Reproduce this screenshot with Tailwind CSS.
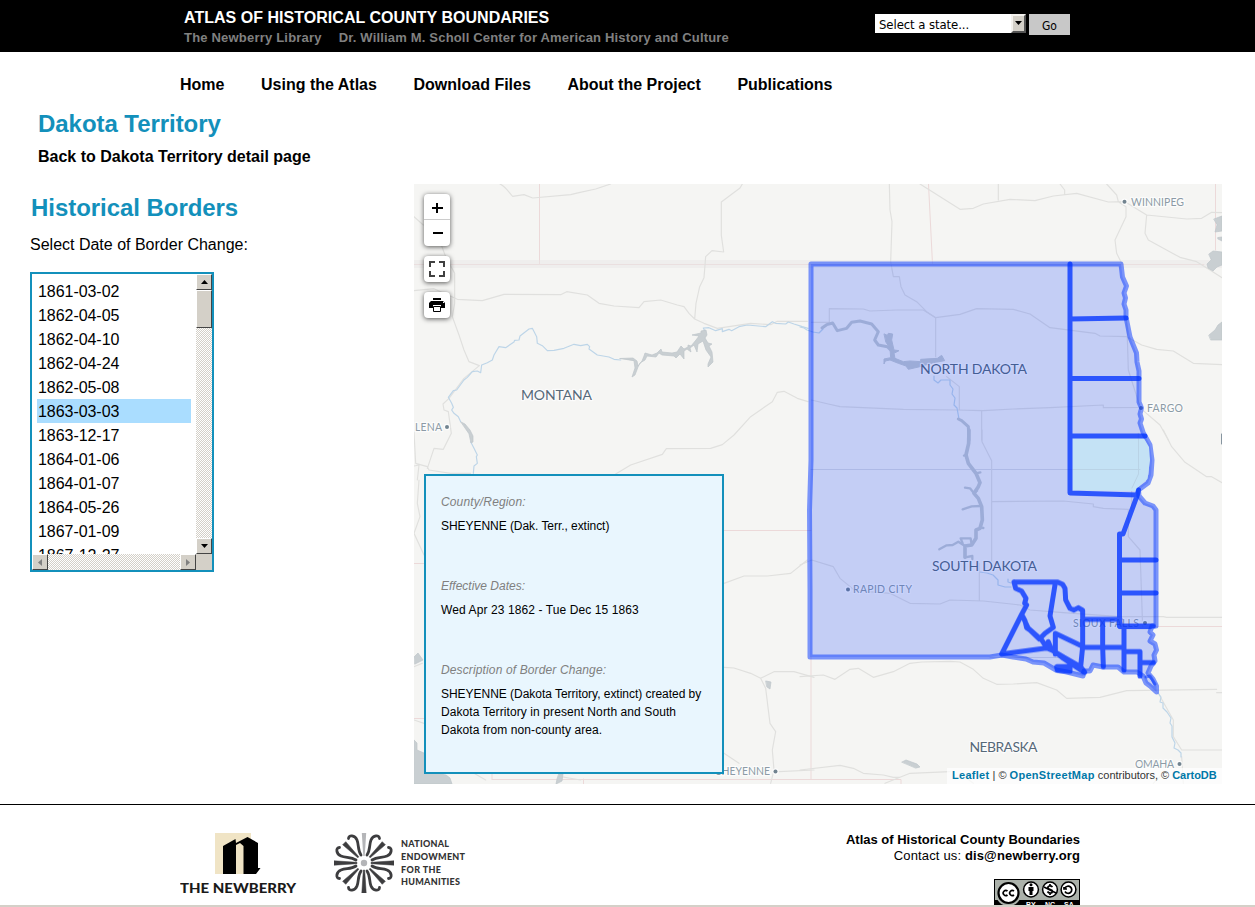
<!DOCTYPE html>
<html lang="en">
<head>
<meta charset="utf-8">
<title>Dakota Territory - Atlas of Historical County Boundaries</title>
<script src="https://cdn.jsdelivr.net/npm/@tailwindcss/browser@4"></script>
</head>
<body class="flex h-[907px] flex-col overflow-hidden bg-white font-['Liberation_Sans',Arial,sans-serif] text-black">
<header class="flex h-[52px] shrink-0 bg-black pl-[184px]">
  <div class="w-[691px] pt-2">
    <h1 class="text-[16px] leading-[19px] font-bold tracking-[0.03px] text-white whitespace-nowrap">ATLAS OF HISTORICAL COUNTY BOUNDARIES</h1>
    <p class="flex gap-[17px] pt-0.5 text-[13px] leading-[17px] font-bold text-[#808080] whitespace-nowrap"><span class="tracking-[0.2px]">The Newberry Library</span><span class="tracking-[0.18px]">Dr. William M. Scholl Center for American History and Culture</span></p>
  </div>
  <div class="flex items-start gap-[3px] pt-[14px] font-['DejaVu_Sans_Condensed','DejaVu_Sans',sans-serif] text-[12px]">
    <div class="flex h-[19px] w-[151px] items-center justify-between bg-white pl-1">
      <span class="pt-[3px] text-[13px] tracking-[-0.08px]">Select a state...</span>
      <span class="flex h-[19px] w-[15px] shrink-0 justify-center border-2 border-t-[#f4f2ee] border-l-[#f4f2ee] border-r-[#555] border-b-[#555] bg-[#d4d0c8] pt-[5px]"><svg width="7" height="4"><path d="M0 0h7L3.500 4z"/></svg></span>
    </div>
    <div class="flex h-[21px] w-[41px] items-center justify-center bg-[#c8c8c8] pt-0.5">Go</div>
  </div>
</header>
<nav class="flex h-[52px] shrink-0 items-end gap-[36.600px] pb-[9px] pl-[180px] text-[16px] leading-[20px] font-bold whitespace-nowrap">
  <a>Home</a><a>Using the Atlas</a><a>Download Files</a><a>About the Project</a><a>Publications</a>
</nav>
<div class="h-20 shrink-0 pl-[38px]">
  <h2 class="pt-[6px] text-[24px] leading-[28px] font-bold tracking-[-0.05px] text-[#1390bb]">Dakota Territory</h2>
  <p class="pt-[9px] text-[16px] leading-[20px] font-bold">Back to Dakota Territory detail page</p>
</div>
<main class="flex h-[621px] shrink-0 border-b border-black">
  <section class="w-[414px] pl-[30px]">
    <h2 class="pt-[10px] pl-px text-[24px] leading-[28px] font-bold tracking-[-0.05px] text-[#1390bb]">Historical Borders</h2>
    <p class="pt-[13px] text-[16px] leading-[20px]">Select Date of Border Change:</p>
    <div class="mt-[17px] flex h-[300px] w-[184px] flex-col border-2 border-[#1390bb]">
      <div class="flex h-[280px]">
        <ul class="h-[280px] w-[164px] overflow-hidden p-[5px] text-[16px] leading-[24px] tracking-[-0.05px] [&>li]:h-6 [&>li]:pt-px [&>li]:pl-px">
          <li>1861-03-02</li><li>1862-04-05</li><li>1862-04-10</li><li>1862-04-24</li><li>1862-05-08</li><li class="bg-[#aaddff]">1863-03-03</li><li>1863-12-17</li><li>1864-01-06</li><li>1864-01-07</li><li>1864-05-26</li><li>1867-01-09</li><li>1867-12-27</li>
        </ul>
        <div class="flex w-4 flex-col bg-[repeating-conic-gradient(#d4d0c8_0_25%,#fff_0_50%)] bg-[length:2px_2px]">
          <span class="flex h-4 items-center justify-center border border-t-white border-l-white border-r-[#444] border-b-[#444] bg-[#d4d0c8]"><svg width="7" height="4"><path d="M0 4h7L3.500 0z"/></svg></span>
          <span class="h-[38px] border border-t-white border-l-white border-r-[#444] border-b-[#444] bg-[#d4d0c8]"></span>
          <span class="flex-1"></span>
          <span class="flex h-4 items-center justify-center border border-t-white border-l-white border-r-[#444] border-b-[#444] bg-[#d4d0c8]"><svg width="7" height="4"><path d="M0 0h7L3.500 4z"/></svg></span>
        </div>
      </div>
      <div class="flex h-4 bg-[repeating-conic-gradient(#d4d0c8_0_25%,#fff_0_50%)] bg-[length:2px_2px]">
        <span class="flex w-4 items-center justify-center border border-t-white border-l-white border-r-[#444] border-b-[#444] bg-[#d4d0c8]"><svg width="4" height="7"><path d="M4 0v7L0 3.500z" fill="#808080"/></svg></span>
        <span class="flex-1"></span>
        <span class="flex w-4 items-center justify-center border border-t-white border-l-white border-r-[#444] border-b-[#444] bg-[#d4d0c8]"><svg width="4" height="7"><path d="M0 0v7l4-3.500z" fill="#808080"/></svg></span>
        <span class="w-4 bg-[#d4d0c8]"></span>
      </div>
    </div>
  </section>
  <section class="relative h-[600px] w-[808px] overflow-hidden bg-[#f5f5f3]">
    <svg class="block h-[600px] w-[808px]" viewBox="414 184 808 600" fill="none" stroke-linejoin="round" stroke-linecap="round">
      <!-- boundaries of modern states and provinces -->
      <g stroke="#ecd9d9">
        <path d="M414 264.500H1204M539.500 184V264M928.500 184L932.500 264M1215.500 184V250M724 530.500H811M414 563.500H424M414 718.500H424M811 657V779M492 779.500H901V784M583.500 779V784M1155 626.500H1222M492 774V779"/>
        <path d="M811 469.500H1140M990 657.500H1060" stroke="#d9dbe0"/>
      </g>
      <path d="M414 264H1222" stroke="#e8e6e6" stroke-width="8" opacity=".45"/>
      <!-- roads -->
      <g stroke="#e0e0de" stroke-width="3.500">
        <g transform="translate(414 180) scale(.33333)">
          <path d="M258 12C276 20 286 40 296 49L330 44L356 54L470 44L495 38L545 27L590 12M985 12L978 24L922 66V166L929 216L894 212L875 230L870 293L857 320L846 370L842 417M0 110L28 135M82 195L95 230L122 280V370L115 410L135 465L150 510L165 545L196 557M0 332L60 326L130 358L205 362L270 343L440 344L458 335L520 345L555 370L600 378L675 383L690 365L740 360L790 375L810 380L825 400L842 417L870 430L910 445L1010 430L1070 434L1090 424H1180M196 557L150 595L105 655L87 672L90 690L103 695L112 760L88 808L60 805L40 865M0 756L5 850L40 860L45 870L110 880H170M0 858L15 855L10 900M605 882L650 855L745 823L757 806L890 805L925 794L960 765L1010 710L1075 665L1090 637L1110 634L1150 655L1182 665"/>
        </g>
        <g transform="translate(800 180) scale(.33333)">
          <path d="M268 12L270 90L276 125L272 245L280 290H298L303 320L315 345L350 365L382 397L407 413V530M360 12L480 88L520 85L550 72L630 58L705 62L760 48L830 40L925 66L975 65L1040 105L1160 117L1205 115L1235 97L1266 98M595 12V60M780 12L794 30V42M920 12L950 45L955 65L978 80V110L945 180L950 220L965 250M1040 105L1035 160L1045 180L1090 205L1140 232L1190 245L1230 270L1266 293"/>
          <path d="M34 427H88V386L190 387L210 393L290 390L370 390L407 413L480 403L530 386L640 388L690 402L750 443L885 460L900 468L980 470M980 470L1025 495L1070 508L1120 513L1180 550L1266 554M980 410L985 570L1020 680M34 660L85 672L120 680L310 688L470 690L550 692L640 687L750 683L910 675V683L1020 682M470 690L545 692V780M440 590L478 620V690M1022 685L1080 735L1105 780"/>
        </g>
        <g transform="translate(800 430) scale(.33333)">
          <path d="M546 0V35L575 92V400M577 215L790 213L880 222V230L910 235L985 238V320L1020 360L1028 590M1015 10V130L995 175V240M0 405L35 390L100 410L120 445L165 482L270 490L330 520L420 522L450 510L550 513L660 525L690 540L790 548L960 560H1090L1100 562H1266M538 400V510M1090 0L1115 50L1155 97L1220 140H1235L1266 158"/>
        </g>
        <g transform="translate(414 470) scale(.33333)">
          <path d="M15 30L10 100L18 140L0 190L30 255M930 340L990 318L1060 318L1130 310L1180 270M930 592L960 594L1010 610L1040 625L1080 605L1140 605L1200 622M1040 625L1055 655L1068 760L1085 785L1075 840L1080 900L1070 940M1095 905L1200 900M930 850L975 880M0 750L30 760M0 590L25 580M180 910L215 930M500 930L440 920"/>
        </g>
        <g transform="translate(800 640) scale(.33333)">
          <path d="M0 110L70 105L105 118L150 88L175 85L220 112L280 95L330 70L365 66L450 64L480 66L520 88L550 115L590 133L640 132L710 128L770 150L800 175L900 172L980 152L1250 148M1266 158H1250M1075 160L1120 240V290L1145 330H1266M0 390L120 376L160 385L190 400L250 405L280 412H300L330 400L450 395M255 430L300 412M1145 350L1150 430M1080 410L1060 430M480 400L520 430"/>
        </g>
      </g>
      <!-- rivers -->
      <g stroke="#bdd5e8" stroke-width="3.500">
        <g transform="translate(414 180) scale(.33333)">
          <path d="M178 880L180 858L190 850L187 830L190 825L180 805L170 785M140 725L133 710L120 700L113 690L118 682L113 670L103 652L118 632L128 630L150 600L160 592L175 575L190 573L200 578L203 555L220 548L235 540L240 525L255 500L275 503L300 486L302 481L315 480L318 468L345 447L355 445L368 470L370 490L385 497L400 512L420 511L450 505L480 493L500 497L520 493L527 500L525 507L550 525L585 531L600 538L620 540M872 452L868 444L885 443L905 452L925 446V455L945 448L953 452L975 440L1000 435L1055 440L1075 425L1085 430L1115 432L1123 426L1140 432L1165 440L1182 445"/>
        </g>
        <path d="M800 327L804 328L807 330L813 332L819 333L823 329M934 376L934 380L938 383L941 380L950 380L950 385L953 389L952 394L955 398L954 405L957 408L959 419M980 572L987 573L993 575L998 580V585L1005 587H1011M1011 583L1008 582V579M1158 693L1161 697L1160 702L1163 703V708L1167 712L1171 718L1170 723L1172 726V737L1175 743L1174 748L1178 750L1181 753V757" stroke-width="1.200"/>
      </g>
      <!-- reservoirs and lakes -->
      <g fill="#c9cfd2" stroke="#bfc6ca" stroke-width=".7">
        <path d="M620 358.500L633 358L637 361L638 366L642 361L644 356L645 353L652 355L657 353L661 349L662 352L672 353L677 352L681 346L684 349L688 347V345L691 346L696 340L699 336L692 335L701 333V331L706 330L707 335L705 338L708 343L712 344L709 346L712 352L713 362L708 367V364L711 357L706 350L703 341L698 344L697 352L694 345L690 348L691 352L687 349L684 351V359L680 354L676 358L674 356L662 355L659 353L656 357L647 356L645 360L640 363L638 367L635 375L632 377L635 368L634 361Z"/>
        <path d="M461 422L465 424L470 430L473 436L473 442L471 443L469 434Z"/>
        <path d="M1214 219L1222 216V231L1215 232L1217 225ZM1218 237.500L1222 237V241L1218 239ZM1209 254L1213 251L1222 252V265L1217 267L1213 271L1208 268L1207 264L1211 260ZM1209 335L1215 330L1218 325L1222 322V340H1211Z"/>
        <path d="M902 762L906 760L917 764L920 767L916 768ZM766 681L771 682L770 689L767 687ZM414 657L418 653L423 660L415 664Z"/>
        <path d="M414 740L417 743V750L424 753L428 765L437 770L440 774L446 775L450 778L452 784H414ZM559 774L563 774L562 781L556 784L557 779Z"/>
      </g>
      <g stroke="#c4cbcf" stroke-width="9">
        <g transform="translate(800 180) scale(.33333)">
          <path d="M66 444L80 434L98 429L112 452L140 445L155 427L180 423L215 432L235 455L224 480L235 495L262 500L272 510M475 717L485 722L505 740L507 780"/>
          <path fill="#c4cbcf" stroke-width="3" d="M253 462L262 466L265 460L278 462L275 480L282 510L297 512L282 520L285 535L310 545L330 543L362 545V538L412 535L425 526L434 542L400 548L360 560L325 568L318 558L295 550L270 540L256 543L252 552L252 537L272 533L270 505L258 487Z"/>
        </g>
        <g transform="translate(800 430) scale(.33333)">
          <path stroke-width="11" d="M507 0L506 40L498 75L505 100L528 130L540 158L535 170L522 190L535 205L545 230L547 270L540 295L528 300V325L515 345L495 348V382"/>
          <path stroke-width="7" d="M498 75L492 77M528 130L541 127M522 190L510 175L495 173M522 190L531 182M543 228L515 229L488 238M540 292L550 294M515 345L512 325L482 325L488 340M495 348L475 335L458 345L440 346L418 358M495 382L517 378V388"/>
        </g>
      </g>
      <!-- place labels -->
      <g font-family="Lato, 'Open Sans', sans-serif" stroke="#fff" stroke-opacity=".7" stroke-width="2.500" paint-order="stroke">
        <g font-size="14" fill="#566979" lengthAdjust="spacingAndGlyphs">
          <text x="521" y="400" textLength="71">MONTANA</text>
          <text x="920" y="374" textLength="107">NORTH DAKOTA</text>
          <text x="932" y="571" textLength="105">SOUTH DAKOTA</text>
          <text x="969.500" y="752" textLength="68">NEBRASKA</text>
        </g>
        <g font-size="10.500" fill="#8c9ba6">
          <text x="1131" y="205.500" textLength="53">WINNIPEG</text>
          <text x="1147" y="411.500" textLength="36">FARGO</text>
          <text x="415" y="430.500" textLength="27">LENA</text>
          <text x="853" y="593" textLength="59">RAPID CITY</text>
          <text x="1073" y="626.500" textLength="66">SIOUX FALLS</text>
          <text x="716" y="775" textLength="54">SHEYENNE</text>
          <text x="1135" y="768" textLength="39">OMAHA</text>
        </g>
        <g fill="#71838f"><circle cx="1124.500" cy="201.700" r="2"/><circle cx="447" cy="427" r="2"/><circle cx="848" cy="589.500" r="2"/><circle cx="1145" cy="623" r="2"/><circle cx="775.500" cy="771.500" r="2"/><circle cx="1179.500" cy="764" r="2"/><circle cx="1141" cy="408" r="2"/></g>
      </g>
      <path d="M1221.500 434V444" stroke="#8795a0"/>
      <!-- territory outline -->
      <path fill="#03f" fill-opacity=".2" stroke="#03f" stroke-opacity=".5" stroke-width="5" d="M811 264H1121L1122.500 277L1126.500 286L1124 293L1125.500 298L1124 304L1126 310V317L1130 337L1132 342L1136.500 353L1137 362L1139 371V402L1141.500 408L1140 414L1141.500 419L1140 423L1143 432L1145 436L1150 445L1152 460L1151 475L1148 483L1138.500 490L1139 496L1145 503L1153 506L1156 510V626H1152L1150 632L1153 635L1150 641L1155 644L1156.500 650L1154 655L1155 661L1151 666L1148 673L1153 679L1156.500 686V692L1150 686L1146 683L1143 676L1137 672H1124L1118 667H1103L1093 665L1090 671H1084L1083 676L1067 672L1056 670L1044 663L1033 662L1026 659L1013 657L1002 655L990 657H810V590L809.500 510L811 460Z"/>
      <!-- Sheyenne county -->
      <path fill="#c4e2f5" d="M1072.500 438.500H1144L1149 447L1150 460L1147.500 479L1137 488L1136 491L1072.500 490.500Z"/>
      <path d="M1072.500 469.500H1140M1138.500 438V474L1132 488" stroke="#b9d3e6"/>
      <!-- shared county borders -->
      <g stroke="#03f" stroke-width="5" opacity=".78">
        <path d="M1070 264V493L1137.500 495M1070 319L1126 318M1070 378.500H1139M1070 436H1145M1138.500 490L1137 496L1123 534H1119.500V626M1119.500 560H1156M1119.500 593H1156M1120 626.500H1150"/>
        <path transform="translate(990 560) scale(.33333)" stroke-width="15" d="M72 66H203L218 73L225 85L227 120L240 145L252 150L265 143L278 151V260L272 320L284 337M196 68L180 168L190 202L165 220L148 237L120 210L110 203L105 182L95 163L35 282L180 263L220 295L280 335M72 66L77 85L95 93L108 115L104 130L110 135L95 163L115 205L155 240L172 265L185 270M196 282V220L276 258L280 262H402M278 178H390M338 178V260L340 320M390 188V198H490M402 200V330M402 275H450V348M450 308H490M200 320H240V334L202 330ZM175 245L185 270L222 292L272 320"/>
      </g>
      <path d="M1146 677L1150 676L1155 684" stroke="#03f" stroke-width="3" stroke-opacity=".5"/>
    </svg>
    <!-- map controls -->
    <div class="absolute top-[10px] left-[10px] flex w-[26px] flex-col gap-[10px]">
      <div class="flex h-[52px] flex-col rounded-[4px] bg-white shadow-[0_1px_5px_rgba(0,0,0,0.65)]">
        <span class="flex h-[26px] items-center justify-center border-b border-[#ccc]"><svg width="26" height="25"><path d="M8 14h11M13 9v10" stroke="#000" stroke-width="2"/></svg></span>
        <span class="flex h-[26px] items-center justify-center"><svg width="26" height="26"><path d="M9 13h10" stroke="#000" stroke-width="2"/></svg></span>
      </div>
      <span class="flex h-[26px] items-center justify-center rounded-[4px] bg-white shadow-[0_1px_5px_rgba(0,0,0,0.65)]"><svg width="16" height="16" fill="none" stroke="#404040" stroke-width="2"><path d="M1 6V1h5M10 1h5v5M15 10v5h-5M6 15H1v-5"/></svg></span>
      <span class="flex h-[26px] items-center justify-center rounded-[4px] bg-white shadow-[0_1px_5px_rgba(0,0,0,0.65)]"><svg width="16" height="14"><path d="M4 0h8v2H4zM2 3h12l2 2v5h-4V7H4v3H0V5z"/><path d="M4.500 8.500h7v5h-7z" fill="#fff" stroke="#000"/><path d="M14 4h1v1h-1z" fill="#fff"/></svg></span>
    </div>
    <!-- county details -->
    <aside class="absolute top-[290px] left-[10px] h-[300px] w-[300px] border-2 border-[#1390bb] bg-[#e9f6fe] pt-[17px] pl-[15px] text-[12px] leading-[18px] whitespace-nowrap">
      <p class="tracking-[0.14px] text-[#808080] italic">County/Region:</p>
      <p class="pt-[6px] tracking-[-0.05px]">SHEYENNE (Dak. Terr., extinct)</p>
      <p class="pt-[42px] text-[#808080] italic">Effective Dates:</p>
      <p class="pt-[6px] tracking-[0.1px]">Wed Apr 23 1862 - Tue Dec 15 1863</p>
      <p class="pt-[42px] tracking-[0.13px] text-[#808080] italic">Description of Border Change:</p>
      <p class="pt-[6px]"><span class="tracking-[-0.03px]">SHEYENNE (Dakota Territory, extinct) created by</span><br><span class="tracking-[0.09px]">Dakota Territory in present North and South<br>Dakota from non-county area.</span></p>
    </aside>
    <div class="absolute right-0 bottom-0 h-4 w-[275px] bg-white/70 pl-[5px] text-[11px] leading-[15px] whitespace-nowrap text-[#333]"><b class="tracking-[0.28px] text-[#0078a8]">Leaflet</b> | © <b class="tracking-[0.3px] text-[#0078a8]">OpenStreetMap</b> <span class="tracking-[-0.03px]">contributors, ©</span> <b class="text-[#0078a8]">CartoDB</b></div>
  </section>
</main>
<footer class="flex h-[100px] shrink-0 overflow-hidden pl-[180px]">
  <div class="flex w-[154px] flex-col pt-7">
    <svg class="ml-[35px]" width="47" height="42"><path d="M0 0h36v41H0z" fill="#f0e4c5"/><path d="M8 13L20.500 6l.5 4 11.500-6L43 10v25h2.500L41 41H28.500V13L25 10l-4 2v29H8z"/></svg>
    <svg width="118" height="19" class="block"><text x="0" y="18" font-family="Lato, sans-serif" font-weight="900" font-size="13" textLength="116" lengthAdjust="spacingAndGlyphs" fill="#1a1a1a">THE NEWBERRY</text></svg>
  </div>
  <div class="flex w-[420px] gap-[7px] pt-7">
    <svg width="60" height="60" viewBox="-30 -30 60 60">
      <defs>
        <path id="spoke" d="M-.7-7L-2.200-30H2.200L.7-7z"/>
        <path id="hook" fill="none" stroke-width="2.800" stroke-linecap="round" d="M3-8C6.500-13 5-18 7-23C9-28 15.500-28.500 15.500-24.500"/>
        <path id="diagonal" d="M-.7-8L-2.200-28H2.200L.7-8z" transform="rotate(45)"/>
        <g id="quad"><use href="#diagonal"/><use href="#hook"/><use href="#hook" transform="matrix(0 -1 -1 0 0 0)"/></g>
      </defs>
      <g fill="#3d3d3f" stroke="#3d3d3f" stroke-width=".5"><use href="#quad"/><use href="#quad" transform="rotate(90)"/><use href="#quad" transform="rotate(180)"/><use href="#quad" transform="rotate(270)"/><use href="#spoke" transform="rotate(90)"/><use href="#spoke" transform="rotate(180)"/><use href="#spoke" transform="rotate(270)"/></g>
      <use href="#spoke" fill="#b4b5b8"/><circle r="3.200" fill="#b4b5b8"/>
    </svg>
    <svg width="66" height="60" font-family="Lato, sans-serif" font-weight="900" font-size="9" fill="#333"><text y="13.500" textLength="48">NATIONAL</text><text y="26.500" textLength="64">ENDOWMENT</text><text y="39.500" textLength="40">FOR THE</text><text y="52" textLength="59">HUMANITIES</text></svg>
  </div>
  <div class="flex w-[326px] flex-col items-end pt-[27px] text-[13px] leading-4 whitespace-nowrap">
    <p class="font-bold">Atlas of Historical County Boundaries</p>
    <p class="tracking-[0.14px]">Contact us: <b>dis@newberry.org</b></p>
    <svg class="mt-[15px] shrink-0" width="86" height="30">
      <path d="M0 0h86v30H0z"/><path d="M1 1h84v20H1z" fill="#abb1aa"/>
      <circle cx="14.500" cy="14" r="13" fill="#abb1aa"/><circle cx="14.500" cy="14" r="10" fill="#fff" stroke="#000" stroke-width="2.200"/>
      <g fill="#fff" stroke="#000" stroke-width="1.500"><circle cx="37" cy="10.500" r="7.400"/><circle cx="56" cy="10.500" r="7.400"/><circle cx="74.500" cy="10.500" r="7.400"/></g>
      <g fill="none" stroke="#000" stroke-width="1.700"><path d="M13.500 12a2.600 2.600 0 1 0 0 4M20 12a2.600 2.600 0 1 0 0 4M50 8l12 6M58.500 8c-2-2-5-1-4.500 1s5 1 4.500 3.500-4 2-5 0M56 5v2M56 14v2"/><path d="M71 9a3.600 3.600 0 1 1 0 3.500M70 8v2h3"/></g>
      <circle cx="37" cy="5.800" r="1.500"/><path d="M34.500 8h5v4h-1v4h-3v-4h-1z"/>
      <g fill="#fff" font-family="Liberation Sans, sans-serif" font-weight="bold" font-size="7"><text x="32" y="28">BY</text><text x="51" y="28">NC</text><text x="70" y="28">SA</text></g>
    </svg>
  </div>
</footer>
<div class="h-[2px] shrink-0 bg-[#d4d0c8]"></div>
</body>
</html>
